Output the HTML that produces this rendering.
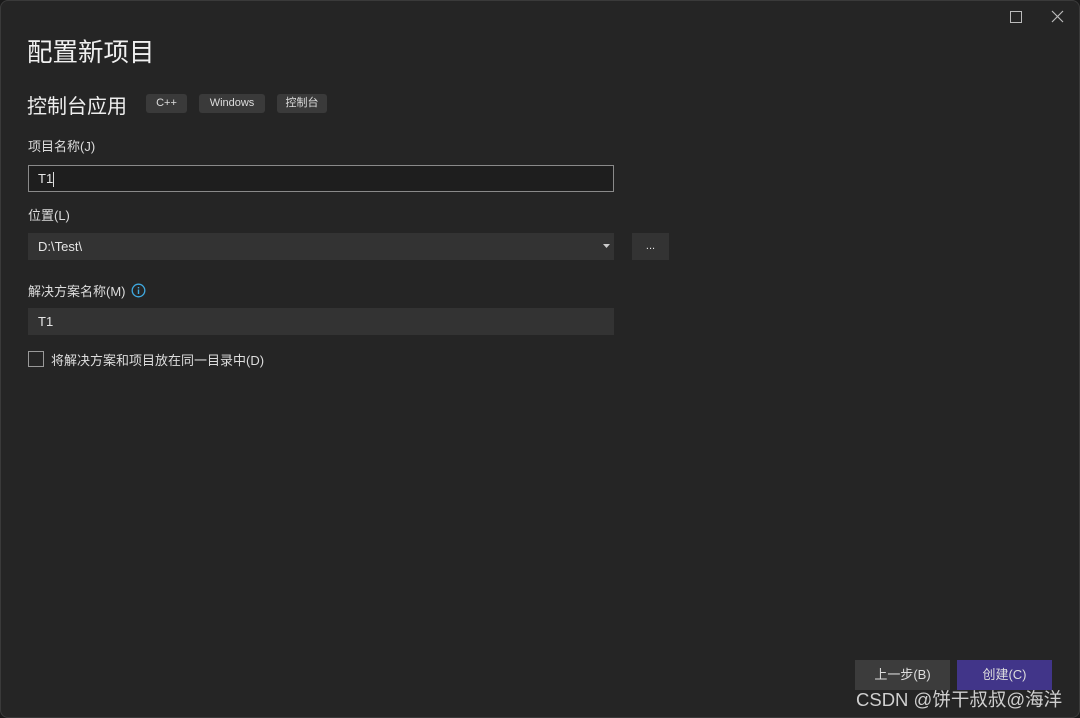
<!DOCTYPE html>
<html><head><meta charset="utf-8"><style>
body{margin:0;width:1080px;height:718px;background:#1a1a1a;overflow:hidden;font-family:"Liberation Sans","Noto Sans CJK SC",sans-serif;color:#e6e6e6;position:relative}
.win{position:absolute;left:0;top:0;width:1080px;height:718px;background:#252525;box-shadow:inset 0 0 0 1px #3a3a3a;border-radius:8px}
.a{position:absolute}
.tag{position:absolute;top:94px;height:19px;background:#3a3a3a;border-radius:3px;font-size:11px;line-height:19px;text-align:center;color:#ddd}
.lbl{position:absolute;left:28px;font-size:13px;color:#ddd}
.box{position:absolute;left:28px;width:586px;height:27px;box-sizing:border-box;font-size:13px;line-height:27px;padding-left:10px}
.btn{position:absolute;top:660px;height:30px;width:95px;font-size:13px;line-height:30px;text-align:center;color:#ddd}
</style></head><body>
<div class="win">
<div class="a" style="left:1010px;top:11px;width:10px;height:10px;border:1px solid #bbb"></div>
<svg class="a" style="left:1051px;top:10px" width="13" height="13"><path d="M1 1L12 12M12 1L1 12" stroke="#bbb" stroke-width="1.2"/></svg>
<div class="a" style="left:27px;top:32px;font-size:25.5px;color:#f0f0f0">配置新项目</div>
<div class="a" style="left:27px;top:90px;font-size:20px;color:#eee">控制台应用</div>
<div class="tag" style="left:146px;width:41px">C++</div>
<div class="tag" style="left:199px;width:66px">Windows</div>
<div class="tag" style="left:277px;width:50px">控制台</div>
<div class="lbl" style="top:136px">项目名称(J)</div>
<div class="box" style="top:165px;background:#1e1e1e;border:1px solid #8a8a8a;line-height:25px;padding-left:9px">T1<span style="display:inline-block;width:1px;height:15px;background:#ddd;vertical-align:middle"></span></div>
<div class="lbl" style="top:205px">位置(L)</div>
<div class="box" style="top:233px;background:#333">D:\Test\</div>
<svg class="a" style="left:603px;top:244px" width="7" height="4"><path d="M0 0H7L3.5 4Z" fill="#ccc"/></svg>
<div class="a" style="left:632px;top:233px;width:37px;height:27px;background:#333;text-align:center;font-size:11px;line-height:27px">...</div>
<div class="lbl" style="top:281px">解决方案名称(M)</div>
<svg class="a" style="left:131px;top:283px" width="15" height="15"><circle cx="7.5" cy="7.5" r="6.3" fill="none" stroke="#3fa9e0" stroke-width="1.3"/><rect x="6.8" y="6.5" width="1.4" height="4.5" fill="#3fa9e0"/><rect x="6.8" y="4" width="1.4" height="1.4" fill="#3fa9e0"/></svg>
<div class="box" style="top:308px;background:#333">T1</div>
<div class="a" style="left:28px;top:351px;width:16px;height:16px;box-sizing:border-box;border:1px solid #999"></div>
<div class="lbl" style="left:51px;top:350px">将解决方案和项目放在同一目录中(D)</div>
<div class="btn" style="left:855px;background:#3c3c3c">上一步(B)</div>
<div class="btn" style="left:957px;background:#413589">创建(C)</div>
<div class="a" style="left:856px;top:686px;font-size:18.5px;color:#cfcfcf">CSDN @饼干叔叔@海洋</div>
</div>
</body></html>
